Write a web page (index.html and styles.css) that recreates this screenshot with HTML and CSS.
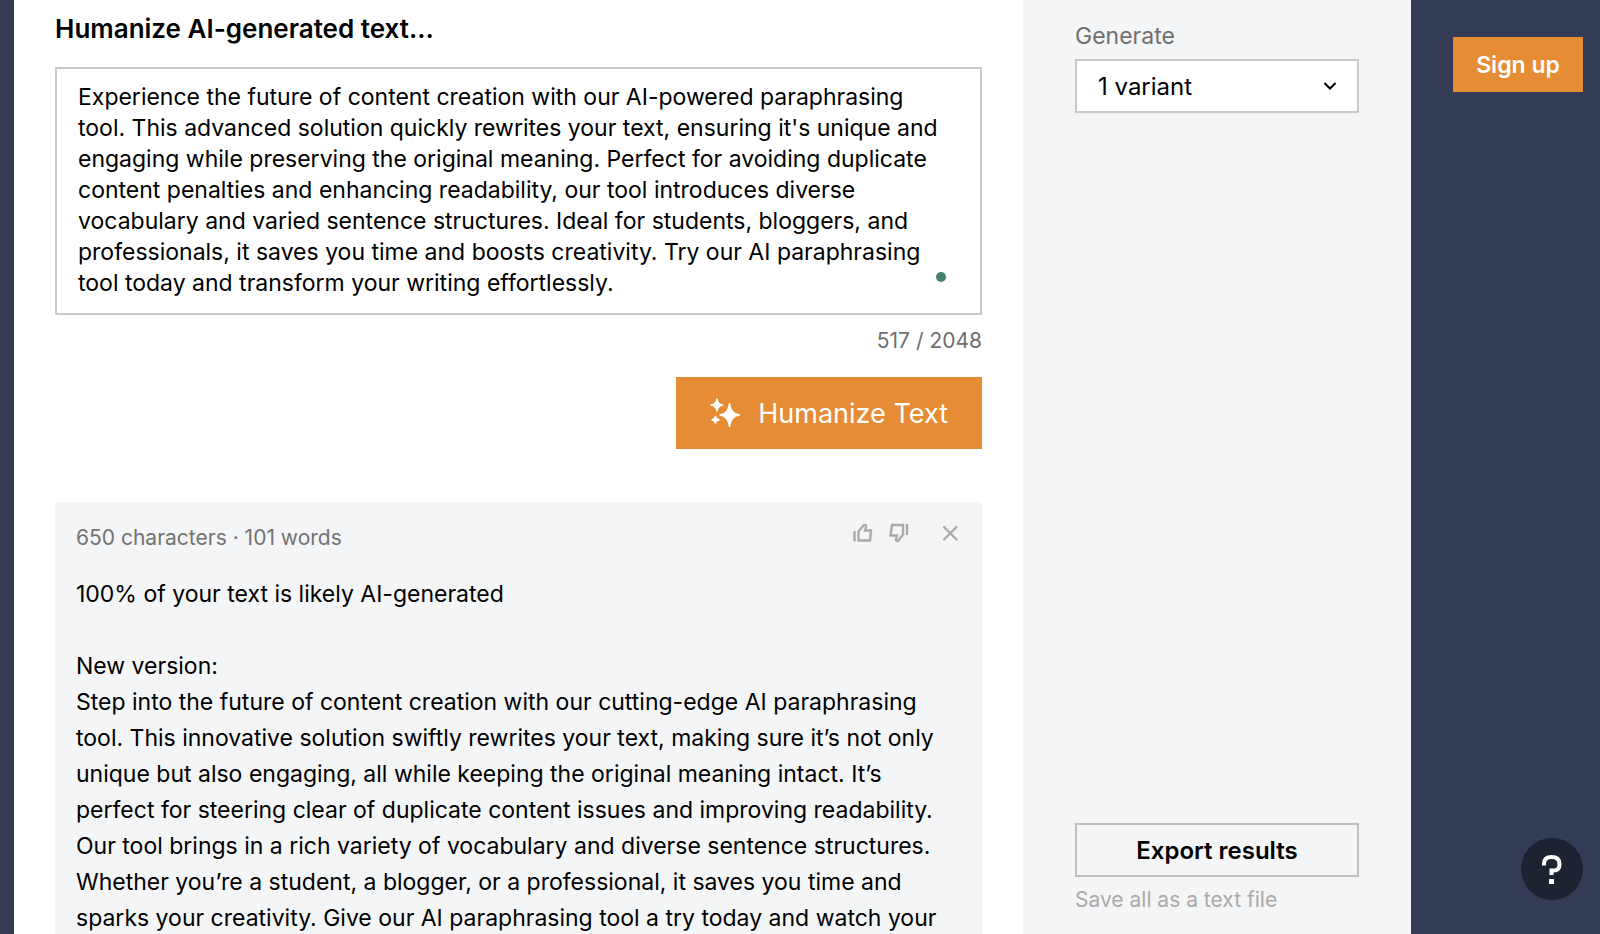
FILE: index.html
```html
<!DOCTYPE html>
<html lang="en">
<head>
<meta charset="utf-8">
<meta name="viewport" content="width=device-width, initial-scale=1">
<title>Humanize AI-generated text</title>
<link rel="stylesheet" href="styles.css">
</head>
<body>
<div class="app">
  <main class="editor">
    <label class="editor-title" for="source">Humanize AI-generated text...</label>
    <div class="source">
      <textarea id="source" class="source-input" rows="7" spellcheck="false">Experience the future of content creation with our AI-powered paraphrasing tool. This advanced solution quickly rewrites your text, ensuring it's unique and engaging while preserving the original meaning. Perfect for avoiding duplicate content penalties and enhancing readability, our tool introduces diverse vocabulary and varied sentence structures. Ideal for students, bloggers, and professionals, it saves you time and boosts creativity. Try our AI paraphrasing tool today and transform your writing effortlessly.</textarea>
      <span class="source-dot"></span>
    </div>
    <p class="counter">517 / 2048</p>
    <button class="btn btn-main" type="button">
      <svg class="sparkles" viewBox="0 0 30 30" aria-hidden="true">
        <path d="M19.500 5.500Q20.700 15.800 29.500 17Q20.700 18.200 19.500 28.500Q18.300 18.200 10 17Q18.300 15.800 19.500 5.500ZM7 1Q7.800 6.200 12.500 7Q7.800 7.800 7 13Q6.200 7.800 1 7Q6.200 6.200 7 1ZM5.500 18.500Q6.200 21 9 21.700Q6.200 22.400 5.500 25Q4.800 22.400 2 21.700Q4.800 21 5.500 18.500Z" fill="#fff" stroke="#fff" stroke-width="1.500" stroke-linejoin="round"/>
      </svg>
      <span>Humanize Text</span>
    </button>
    <article class="result">
      <header class="result-head">
        <p class="result-meta">650 characters · 101 words</p>
        <div class="result-tools">
          <button class="tool" type="button" aria-label="Like">
            <svg viewBox="0 0 20 20" aria-hidden="true"><path d="M1.500 8V18.500M5.500 17.500V8.500L10.500 2.500Q12.500 1 13.200 3L12 7.500H18L17 17.500Z"/></svg>
          </button>
          <button class="tool" type="button" aria-label="Dislike">
            <svg viewBox="0 0 20 20" aria-hidden="true"><path d="M18 1V12M14 2V11.500L9.500 17.500Q7.500 19 6.800 17L8 12.500H1.500L3 2Z"/></svg>
          </button>
          <button class="tool tool-close" type="button" aria-label="Close">
            <svg viewBox="0 0 20 20" aria-hidden="true"><path d="M3 4L15.500 16.500M15.500 4L3 16.500" stroke-linecap="round"/></svg>
          </button>
        </div>
      </header>
      <div class="result-body">
        <p class="verdict">100% of your text is likely AI-generated</p>
        <p>New version:</p>
        <p>Step into the future of content creation with our cutting-edge AI paraphrasing tool. This innovative solution swiftly rewrites your text, making sure it’s not only unique but also engaging, all while keeping the original meaning intact. It’s perfect for steering clear of duplicate content issues and improving readability. Our tool brings in a rich variety of vocabulary and diverse sentence structures. Whether you’re a student, a blogger, or a professional, it saves you time and sparks your creativity. Give our AI paraphrasing tool a try today and watch your</p>
      </div>
    </article>
  </main>
  <aside class="options">
    <div class="field">
      <label class="field-label" for="variants">Generate</label>
      <div class="select">
        <select id="variants" class="select-input"><option>1 variant</option></select>
        <svg class="select-arrow" viewBox="0 0 14 10" aria-hidden="true"><path d="M1.500 2L7 7.500L12.500 2"/></svg>
      </div>
    </div>
    <div class="export">
      <button class="btn btn-outline" type="button">Export results</button>
      <p class="export-note">Save all as a text file</p>
    </div>
  </aside>
  <nav class="account">
    <button class="btn btn-signup" type="button">Sign up</button>
    <button class="help" type="button" aria-label="Help">
      <svg viewBox="0 0 24 34" aria-hidden="true"><path d="M4 13.500V12Q4 5 11.500 5Q19.500 5 19.500 12Q19.500 18.500 14 18.500H11.500V23"/><rect x="9" y="27" width="5" height="5"/></svg>
    </button>
  </nav>
</div>
</body>
</html>
```
FILE: styles.css
```css
* { box-sizing: border-box; }
body {
  margin: 0;
  background: #343b55;
  color: #000;
  font-family: Inter, "Liberation Sans", sans-serif;
}
p { margin: 0; }
button, select, textarea { font-family: inherit; color: inherit; }
button { cursor: pointer; }

.app {
  display: grid;
  grid-template-columns: minmax(0, 1fr) 388px 189px;
  height: 100vh;
  padding-left: 14px;
  overflow: hidden;
}

.editor {
  display: flex;
  flex-direction: column;
  min-height: 0;
  padding: 13px 41px 0;
  background: #fff;
  overflow: hidden;
}
.editor-title {
  font-size: 26px;
  font-weight: 600;
  line-height: 32px;
  margin-bottom: 22px;
}
.source { position: relative; display: flex; }
.source-input {
  flex: 1;
  padding: 13px 34px 14px 21px;
  border: 2px solid #c9c9c9;
  border-radius: 0;
  background: #fff;
  font-size: 23px;
  line-height: 31px;
  resize: none;
  overflow: hidden;
}
.source-dot {
  position: absolute;
  right: 36px;
  bottom: 33px;
  width: 10px;
  height: 10px;
  border-radius: 50%;
  background: #44806f;
}
.counter {
  margin-top: 11px;
  text-align: right;
  color: #6f6f6f;
  font-size: 21px;
  line-height: 30px;
}

.btn { border: 0; border-radius: 0; }
.btn-main {
  display: flex;
  align-items: center;
  align-self: flex-end;
  flex: none;
  gap: 18px;
  height: 72px;
  margin: 21px 0 53px;
  padding: 0 34px;
  background: #e68c34;
  color: #fff;
  font-size: 27px;
}
.sparkles { width: 30px; height: 30px; }

.result {
  flex: none;
  padding: 20px 21px 0;
  background: #f4f5f6;
}
.result-head {
  display: flex;
  justify-content: space-between;
  margin-bottom: 22px;
}
.result-meta {
  color: #737373;
  font-size: 21px;
  line-height: 32px;
}
.result-tools { display: flex; gap: 16px; height: 22px; }
.tool { padding: 0; border: 0; background: none; }
.tool svg {
  display: block;
  width: 20px;
  height: 20px;
  fill: none;
  stroke: #ababab;
  stroke-width: 2.4;
}
.tool-close { margin-left: 16px; }
.result-body { font-size: 23px; line-height: 36px; }
.verdict { margin-bottom: 36px; }

.options {
  display: flex;
  flex-direction: column;
  justify-content: space-between;
  padding: 20px 52px;
  background: #f4f5f6;
}
.field-label {
  display: block;
  margin-bottom: 7px;
  color: #6f6f6f;
  font-size: 23px;
  line-height: 32px;
}
.select { position: relative; }
.select-input {
  width: 100%;
  height: 54px;
  padding: 0 21px;
  border: 2px solid #c9c9c9;
  border-radius: 0;
  background: #fff;
  font-size: 24px;
  appearance: none;
}
.select-arrow {
  position: absolute;
  top: 22px;
  right: 22px;
  width: 14px;
  height: 10px;
  fill: none;
  stroke: #000;
  stroke-width: 2;
  pointer-events: none;
}
.btn-outline {
  width: 100%;
  height: 54px;
  border: 2px solid #c0c0c0;
  background: none;
  font-size: 24px;
  font-weight: 600;
}
.export-note {
  margin-top: 9px;
  color: #aaa;
  font-size: 21px;
  line-height: 28px;
}

.account {
  display: flex;
  flex-direction: column;
  justify-content: space-between;
  align-items: flex-end;
  padding: 37px 17px 34px;
}
.btn-signup {
  width: 130px;
  height: 55px;
  background: #e68c34;
  color: #fff;
  font-size: 23px;
  font-weight: 600;
}
.help {
  display: grid;
  place-items: center;
  width: 62px;
  height: 62px;
  padding: 0;
  border: 0;
  border-radius: 50%;
  background: #1d2331;
}
.help svg { width: 24px; height: 34px; fill: none; stroke: #fff; stroke-width: 4; }
.help rect { fill: #fff; stroke: none; }
```
